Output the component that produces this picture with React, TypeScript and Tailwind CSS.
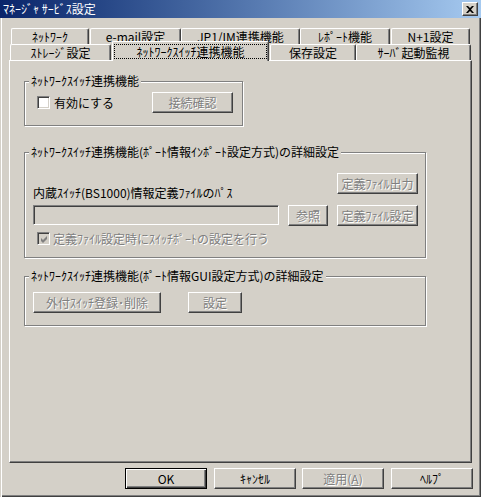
import React from "react";

const FONT = "font-['Noto_Sans_CJK_JP','Noto_Sans',sans-serif]";

function Btn({
  className = "",
  disabled = false,
  children,
}: {
  className?: string;
  disabled?: boolean;
  children: React.ReactNode;
}) {
  return (
    <div
      className={`h-[21px] flex items-center justify-center bg-[#d4d0c8] border border-t-white border-l-white border-r-[#404040] border-b-[#404040] shadow-[inset_-1px_-1px_0_#808080] text-[12px] leading-[14px] whitespace-nowrap ${
        disabled ? "text-[#808080] [text-shadow:1px_1px_0_#fff]" : "text-black"
      } ${className}`}
    >
      {children}
    </div>
  );
}

function Check({ checked = false, disabled = false }: { checked?: boolean; disabled?: boolean }) {
  return (
    <div
      className={`w-[13px] h-[13px] shrink-0 flex items-center justify-center border border-t-[#808080] border-l-[#808080] border-b-white border-r-white shadow-[inset_1px_1px_0_#404040,inset_-1px_-1px_0_#d4d0c8] ${
        disabled ? "bg-[#d4d0c8]" : "bg-white"
      }`}
    >
      {checked && (
        <svg width="7" height="7" viewBox="0 0 7 7" className="ml-[1px] mt-[1px]">
          <polygon points="0,2 2,4 6,0 6,3 2,7 0,5" fill={disabled ? "#808080" : "#000"} />
        </svg>
      )}
    </div>
  );
}

function Group({
  title,
  className = "",
  children,
}: {
  title: string;
  className?: string;
  children: React.ReactNode;
}) {
  return (
    <div
      className={`flex flex-col border border-[#808080] shadow-[1px_1px_0_#fff,inset_1px_1px_0_#fff] ${className}`}
    >
      <div className="h-0 flex">
        <span className="-mt-[8px] ml-[4px] px-[2px] h-[14px] bg-[#d4d0c8] text-[12px] leading-[14px] text-black whitespace-nowrap">
          {title}
        </span>
      </div>
      {children}
    </div>
  );
}

function Tab({ className = "", children }: { className?: string; children: React.ReactNode }) {
  return (
    <div
      className={`h-[16px] flex items-center justify-center bg-[#d4d0c8] border-l border-t border-r border-l-white border-t-white border-r-[#404040] shadow-[inset_-1px_0_0_#808080] rounded-t-[2px] text-[12px] leading-[14px] text-black whitespace-nowrap ${className}`}
    >
      {children}
    </div>
  );
}

export default function App() {
  return (
    <div
      className={`w-[481px] h-[497px] flex flex-col bg-[#d4d0c8] shadow-[inset_1px_0_0_#d4d0c8,inset_2px_0_0_#fff,inset_-1px_-1px_0_#404040,inset_-2px_-2px_0_#808080] ${FONT}`}
    >
      {/* Title bar */}
      <div className="h-[18px] flex items-center bg-linear-to-r from-[#0a246a] to-[#a6caf0] pl-[3px] pr-[3px]">
        <span className="text-white text-[12px] leading-[14px] whitespace-nowrap">ﾏﾈｰｼﾞｬ ｻｰﾋﾞｽ設定</span>
        <div className="ml-auto w-[16px] h-[14px] flex items-center justify-center bg-[#d4d0c8] border border-t-white border-l-white border-r-[#404040] border-b-[#404040] shadow-[inset_-1px_-1px_0_#808080]">
          <svg width="8" height="7" viewBox="0 0 8 7">
            <path d="M0 0h2l2 2 2-2h2L5 3.5 8 7H6L4 5 2 7H0l3-3.5z" fill="#000" />
          </svg>
        </div>
      </div>

      {/* Tabs row 1 */}
      <div className="mt-[10px] flex pl-[11px]">
        <Tab className="w-[78px]">ﾈｯﾄﾜｰｸ</Tab>
        <Tab className="w-[91px] ml-[1px]">e-mail設定</Tab>
        <Tab className="w-[119px]">JP1/IM連携機能</Tab>
        <Tab className="w-[90px]">ﾚﾎﾟｰﾄ機能</Tab>
        <Tab className="w-[79px] ml-[1px]">N+1設定</Tab>
      </div>
      {/* Tabs row 2 */}
      <div className="flex items-start h-[16px] pl-[10px]">
        <Tab className="w-[101px]">ｽﾄﾚｰｼﾞ設定</Tab>
        <div className="relative -top-[3px] z-10 ml-[1px] w-[157px] h-[20px] bg-[#d4d0c8] border-l border-t border-r border-l-white border-t-white border-r-[#404040] shadow-[inset_-1px_0_0_#808080] rounded-t-[2px]">
          <div className="mx-[1px] mt-[2px] h-[15px] border border-dotted border-black flex items-center justify-center text-[12px] leading-[14px] text-black whitespace-nowrap">
            ﾈｯﾄﾜｰｸｽｲｯﾁ連携機能
          </div>
        </div>
        <Tab className="w-[86px] ml-[1px]">保存設定</Tab>
        <Tab className="w-[115px]">ｻｰﾊﾞ起動監視</Tab>
      </div>

      {/* Panel */}
      <div className="ml-[9px] w-[463px] h-[403px] flex flex-col pl-[14px] border border-t-white border-l-white border-r-[#404040] border-b-[#404040] shadow-[inset_-1px_-1px_0_#808080]">
        <Group title="ﾈｯﾄﾜｰｸｽｲｯﾁ連携機能" className="mt-[20px] w-[219px] h-[45px]">
          <div className="mt-[10px] flex items-center h-[21px] pl-[12px]">
            <Check />
            <span className="ml-[4px] text-[12px] leading-[14px] text-black whitespace-nowrap">有効にする</span>
            <Btn disabled className="ml-auto mr-[9px] w-[81px]">
              接続確認
            </Btn>
          </div>
        </Group>

        <Group
          title="ﾈｯﾄﾜｰｸｽｲｯﾁ連携機能(ﾎﾟｰﾄ情報ｲﾝﾎﾟｰﾄ設定方式)の詳細設定"
          className="mt-[26px] w-[402px] h-[106px]"
        >
          <div className="mt-[20px] flex items-start">
            <span className="ml-[8px] mt-[13px] text-[12px] leading-[14px] text-black whitespace-nowrap">
              内蔵ｽｲｯﾁ(BS1000)情報定義ﾌｧｲﾙのﾊﾟｽ
            </span>
            <Btn disabled className="ml-auto mr-[7px] w-[81px]">
              定義ﾌｧｲﾙ出力
            </Btn>
          </div>
          <div className="mt-[5px] flex items-start pl-[8px]">
            <div className="w-[246px] h-[20px] bg-[#d4d0c8] border border-t-[#808080] border-l-[#808080] border-b-white border-r-white shadow-[inset_1px_1px_0_#404040,inset_-1px_-1px_0_#d4d0c8]" />
            <Btn disabled className="ml-[9px] w-[40px]">
              参照
            </Btn>
            <Btn disabled className="ml-[9px] w-[81px]">
              定義ﾌｧｲﾙ設定
            </Btn>
          </div>
          <div className="mt-[6px] flex items-center h-[13px] pl-[12px]">
            <Check checked disabled />
            <span className="ml-[3px] text-[12px] leading-[14px] text-[#808080] [text-shadow:1px_1px_0_#fff] whitespace-nowrap">
              定義ﾌｧｲﾙ設定時にｽｲｯﾁﾎﾟｰﾄの設定を行う
            </span>
          </div>
        </Group>

        <Group
          title="ﾈｯﾄﾜｰｸｽｲｯﾁ連携機能(ﾎﾟｰﾄ情報GUI設定方式)の詳細設定"
          className="mt-[18px] w-[402px] h-[50px]"
        >
          <div className="mt-[15px] flex items-start pl-[8px]">
            <Btn disabled className="w-[128px]">
              外付ｽｲｯﾁ登録･削除
            </Btn>
            <Btn disabled className="ml-[27px] w-[54px]">
              設定
            </Btn>
          </div>
        </Group>
      </div>

      {/* Bottom buttons */}
      <div className="mt-[5px] flex pl-[125px]">
        <div className="w-[82px] h-[21px] flex items-center justify-center bg-[#d4d0c8] border border-black shadow-[inset_1px_1px_0_#fff,inset_-1px_-1px_0_#404040,inset_-2px_-2px_0_#808080] text-[12px] leading-[14px] text-black">
          OK
        </div>
        <Btn className="ml-[7px] w-[82px]">ｷｬﾝｾﾙ</Btn>
        <Btn disabled className="ml-[6px] w-[82px]">
          <span>
            適用(<span className="underline">A</span>)
          </span>
        </Btn>
        <Btn className="ml-[7px] w-[82px]">ﾍﾙﾌﾟ</Btn>
      </div>
    </div>
  );
}
